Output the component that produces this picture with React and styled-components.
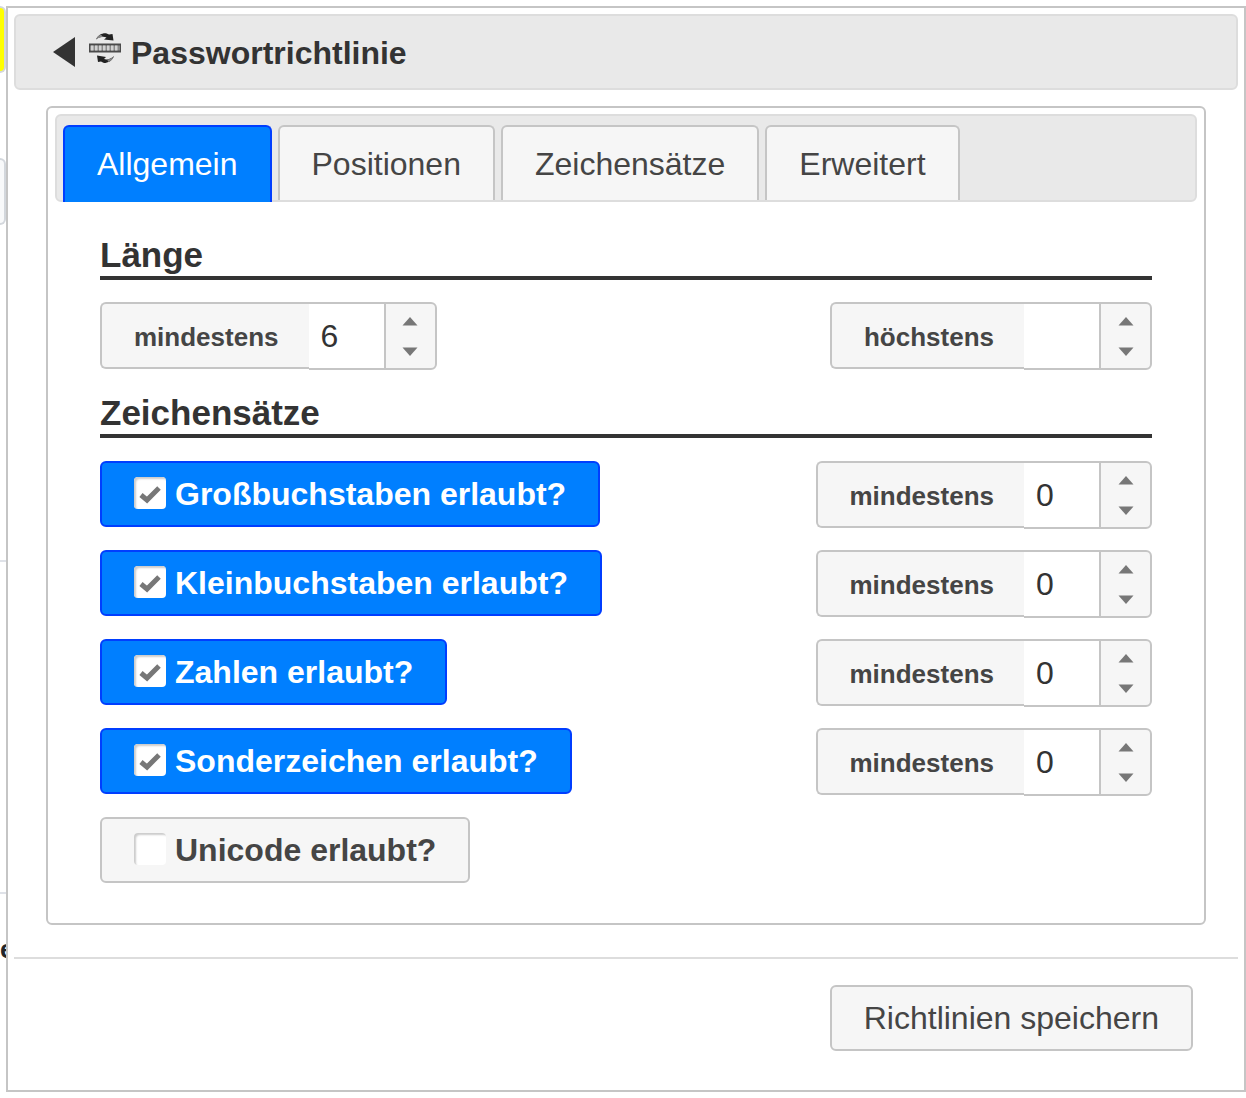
import React, { useState } from "react";
import styled, { createGlobalStyle } from "styled-components";

const GlobalStyle = createGlobalStyle`
  *, *::before, *::after { box-sizing: border-box; }
  body {
    margin: 0;
    background: #fff;
    color: #333;
    font-family: "Liberation Sans", Arial, sans-serif;
    font-size: 32px;
    line-height: 36px;
  }
  button, input { font: inherit; color: inherit; margin: 0; }
`;

const Page = styled.div`
  display: grid;
  grid-template-columns: 6px minmax(0, 1fr);
  padding: 6px 0;
`;

const Underlay = styled.aside`
  display: flex;
  flex-direction: column;
  overflow: hidden;
`;

const Swatch = styled.div`
  height: 67px;
  background: ${(p) => p.$fill};
  border: 2px solid #d3d7dc;
  border-left: 0;
  border-radius: 0 6px 6px 0;
  margin-bottom: ${(p) => p.$after}px;
`;

const Rule = styled.div`
  height: 2px;
  background: #dfe2e8;
  margin-bottom: ${(p) => p.$after}px;
`;

const Cut = styled.div`
  font-size: 26px;
  font-weight: bold;
  color: #212529;
`;

const Dialog = styled.section`
  border: 2px solid #c5c5c5;
  background: #fff;
  padding: 6px;
`;

const TitleBar = styled.header`
  display: flex;
  align-items: center;
  height: 76px;
  padding: 0 37px;
  gap: 14px;
  background: #e9e9e9;
  border: 2px solid #ddd;
  border-radius: 6px;
`;

const BackButton = styled.button`
  display: flex;
  padding: 0;
  border: 0;
  background: none;
`;

const Title = styled.h1`
  margin: 0;
  padding-top: 2px;
  font-size: 32px;
  line-height: 36px;
`;

const TitleGroup = styled.div`
  display: flex;
  align-items: center;
  gap: 10px;
`;

const Panel = styled.div`
  margin: 16px 32px 32px;
  padding: 6px 7px 40px;
  border: 2px solid #c5c5c5;
  border-radius: 6px;
`;

const TabBar = styled.div`
  display: flex;
  align-items: flex-end;
  gap: 6px;
  height: 88px;
  padding: 0 6px;
  background: #e9e9e9;
  border: 2px solid #ddd;
  border-radius: 6px;
`;

const Tab = styled.button`
  height: ${(p) => (p.$active ? 77 : 75)}px;
  margin-bottom: ${(p) => (p.$active ? -2 : 0)}px;
  padding: 0 32px ${(p) => (p.$active ? 2 : 0)}px;
  border: 2px solid ${(p) => (p.$active ? "#003eff" : "#c5c5c5")};
  border-bottom: 0;
  border-radius: 6px 6px 0 0;
  background: ${(p) => (p.$active ? "#007fff" : "#f6f6f6")};
  color: ${(p) => (p.$active ? "#fff" : "#454545")};
`;

const Content = styled.div`
  padding: 34px 45px 0;
`;

const Heading = styled.h2`
  margin: 0 0 ${(p) => p.$after}px;
  padding-bottom: 3px;
  border-bottom: 4px solid #333;
  font-size: 35px;
  line-height: 37px;
`;

const Rows = styled.div`
  display: flex;
  flex-direction: column;
  gap: 21px;
  margin-bottom: ${(p) => p.$after}px;
`;

const Row = styled.div`
  display: flex;
  justify-content: space-between;
  align-items: flex-start;
`;

const SpinnerGroup = styled.div`
  display: flex;
  align-items: flex-start;
`;

const SpinnerLabel = styled.label`
  display: flex;
  align-items: center;
  height: 67px;
  padding: 2px 30px 0 32px;
  border: 2px solid #c5c5c5;
  border-right: 0;
  border-radius: 6px 0 0 6px;
  background: #f6f6f6;
  color: #454545;
  font-size: 26px;
  line-height: 30px;
  font-weight: bold;
`;

const SpinnerInput = styled.input`
  width: 75px;
  height: 68px;
  padding: 0 12px;
  border: 2px solid #c5c5c5;
  border-width: 2px 0;
  border-radius: 0;
  background: #fff;
`;

const Stepper = styled.div`
  display: flex;
  flex-direction: column;
  width: 53px;
  height: 68px;
  padding: 1px 0;
  border: 2px solid #c5c5c5;
  border-radius: 0 6px 6px 0;
  background: #f6f6f6;
`;

const StepButton = styled.button`
  display: flex;
  flex: 1;
  align-items: center;
  justify-content: center;
  padding: 0;
  border: 0;
  background: none;
`;

const Toggle = styled.label`
  display: flex;
  align-items: center;
  gap: 9px;
  height: 66px;
  padding: 0 32px;
  border: 2px solid ${(p) => (p.$on ? "#003eff" : "#c5c5c5")};
  border-radius: 6px;
  background: ${(p) => (p.$on ? "#007fff" : "#f6f6f6")};
  color: ${(p) => (p.$on ? "#fff" : "#454545")};
  font-weight: bold;
`;

const CheckWrap = styled.span`
  display: grid;
  margin-bottom: 2px;

  > * { grid-area: 1 / 1; }
  svg { pointer-events: none; z-index: 1; }
`;

const Check = styled.input`
  appearance: none;
  width: 32px;
  height: 32px;
  border-radius: 4px;
  background: #fff;
  box-shadow: inset 2px 2px 2px #ccc;
`;

const Footer = styled.footer`
  display: flex;
  justify-content: flex-end;
  padding: 26px 45px 33px;
  border-top: 2px solid #ddd;
`;

const SaveButton = styled.button`
  height: 66px;
  padding: 0 32px;
  border: 2px solid #c5c5c5;
  border-radius: 6px;
  background: #f6f6f6;
  color: #454545;
`;

function PolicyIcon() {
  return (
    <svg width="32" height="40" viewBox="0 0 32 40" aria-hidden="true">
      <path d="M7 7.500C9 3 13 1 17 1.300L20 2.500L23.500 2L24.500 8.500L15 7.500L17.500 5.500C14 4 10 5 7 7.500Z" fill="#222" />
      <path d="M7 7.500C8 5 10 3 12 2.500L14 5C11 5 9 6 7 7.500Z" fill="#888" />
      <rect y="11.500" width="32" height="9" fill="#4a4a4a" />
      <rect x="1" y="13.500" width="30" height="5" fill="#8a8a8a" />
      <path d="M2 16H30" stroke="#d2d2d2" strokeWidth="5" strokeDasharray="2.500 1.500" />
      <path d="M25 24C23 29 19 31 15 31L12 29.500L9 30L8 23.500L17 25L15 27C18 28 22 27 25 24Z" fill="#222" />
      <path d="M25 24C24 27 22 29 19.500 30L18 27.500C21 27.500 23 26 25 24Z" fill="#888" />
    </svg>
  );
}

function Arrow({ up }) {
  return (
    <svg width="16" height="10" viewBox="0 0 16 10" aria-hidden="true">
      <path d={up ? "M8 1L15.500 9.500H0.500Z" : "M0.500 0.500H15.500L8 9Z"} fill="#777" />
    </svg>
  );
}

function Spinner({ id, label, initial = "" }) {
  const [value, setValue] = useState(initial);
  const step = (d) => setValue(String(Math.max(0, (Number(value) || 0) + d)));
  return (
    <SpinnerGroup>
      <SpinnerLabel htmlFor={id}>{label}</SpinnerLabel>
      <SpinnerInput id={id} inputMode="numeric" value={value} onChange={(e) => setValue(e.target.value)} />
      <Stepper>
        <StepButton type="button" aria-label="+" onClick={() => step(1)}><Arrow up /></StepButton>
        <StepButton type="button" aria-label="-" onClick={() => step(-1)}><Arrow /></StepButton>
      </Stepper>
    </SpinnerGroup>
  );
}

function Option({ label, initial }) {
  const [on, setOn] = useState(initial);
  return (
    <Toggle $on={on}>
      <CheckWrap>
        <Check type="checkbox" checked={on} onChange={() => setOn(!on)} />
        {on && (
          <svg width="32" height="32" viewBox="0 0 32 32" aria-hidden="true">
            <path d="M7 18L13 23L25 11" fill="none" stroke="#777" strokeWidth="5" />
          </svg>
        )}
      </CheckWrap>
      <span>{label}</span>
    </Toggle>
  );
}

const tabs = ["Allgemein", "Positionen", "Zeichensätze", "Erweitert"];
const options = [
  { id: "upper", label: "Großbuchstaben erlaubt?", on: true },
  { id: "lower", label: "Kleinbuchstaben erlaubt?", on: true },
  { id: "digits", label: "Zahlen erlaubt?", on: true },
  { id: "special", label: "Sonderzeichen erlaubt?", on: true },
  { id: "unicode", label: "Unicode erlaubt?", on: false },
];

export default function App() {
  const [active, setActive] = useState(tabs[0]);
  return (
    <Page>
      <GlobalStyle />
      <Underlay>
        <Swatch $fill="#ff0" $after={85} />
        <Swatch $fill="#f8f9fa" $after={335} />
        <Rule $after={330} />
        <Rule $after={37} />
        <Cut>e</Cut>
      </Underlay>
      <Dialog>
        <TitleBar>
          <BackButton type="button" aria-label="Zurück">
            <svg width="22" height="30" viewBox="0 0 22 30" aria-hidden="true">
              <path d="M22 0V30L0 15Z" fill="#333" />
            </svg>
          </BackButton>
          <TitleGroup>
            <PolicyIcon />
            <Title>Passwortrichtlinie</Title>
          </TitleGroup>
        </TitleBar>
        <Panel>
          <TabBar role="tablist">
            {tabs.map((t) => (
              <Tab key={t} type="button" role="tab" aria-selected={t === active} $active={t === active} onClick={() => setActive(t)}>
                {t}
              </Tab>
            ))}
          </TabBar>
          <Content>
            <Heading $after={22}>Länge</Heading>
            <Rows $after={24}>
              <Row>
                <Spinner id="length-min" label="mindestens" initial="6" />
                <Spinner id="length-max" label="höchstens" />
              </Row>
            </Rows>
            <Heading $after={23}>Zeichensätze</Heading>
            <Rows $after={0}>
              {options.map((o) => (
                <Row key={o.id}>
                  <Option label={o.label} initial={o.on} />
                  {o.on && <Spinner id={o.id} label="mindestens" initial="0" />}
                </Row>
              ))}
            </Rows>
          </Content>
        </Panel>
        <Footer>
          <SaveButton type="button">Richtlinien speichern</SaveButton>
        </Footer>
      </Dialog>
    </Page>
  );
}
